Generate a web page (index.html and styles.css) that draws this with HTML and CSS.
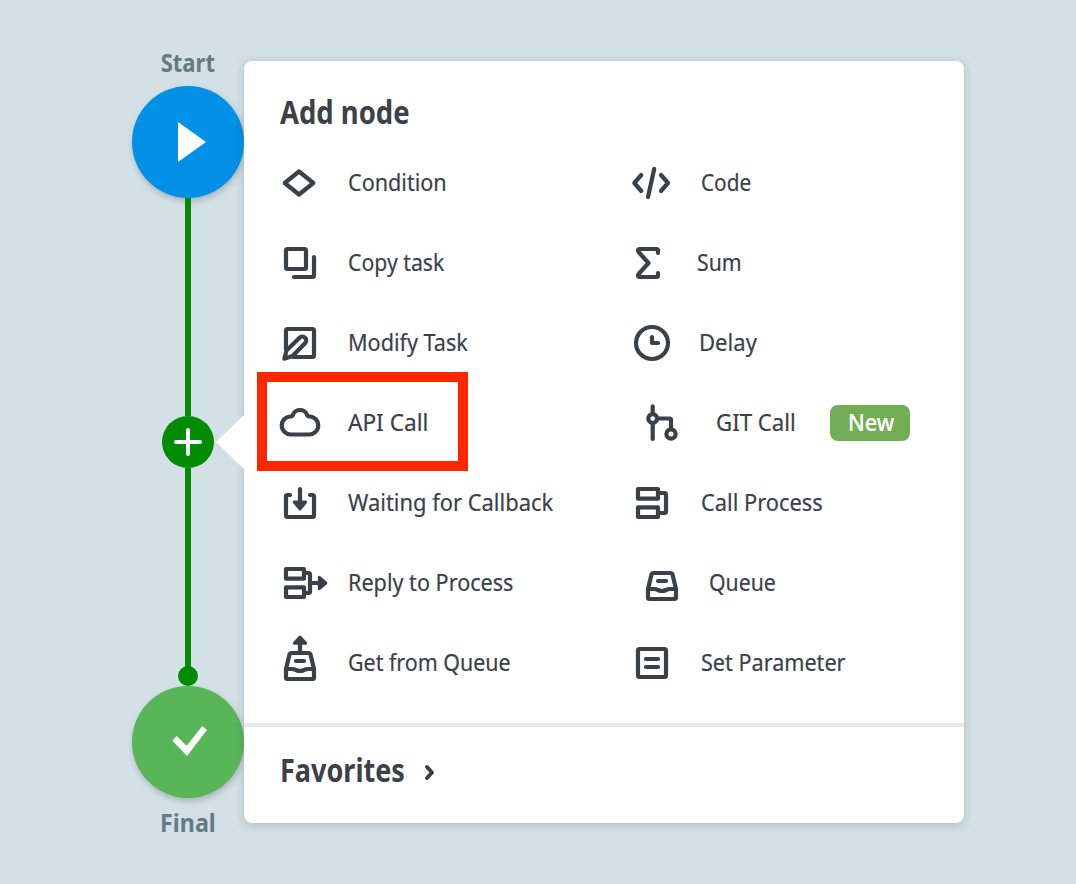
FILE: index.html
```html
<!DOCTYPE html>
<html lang="en">
<head>
<meta charset="utf-8">
<title>Add node</title>
<link rel="stylesheet" href="styles.css">
</head>
<body>
<main class="canvas">
  <section class="flow">
    <div class="node-label">Start</div>
    <div class="node node-start"><svg viewBox="0 0 112 112"><path d="M46 36 74 56 46 76Z"/></svg></div>
    <div class="edge edge-top"></div>
    <div class="plus"><svg viewBox="0 0 52 52"><path d="M26 14V38M14 26H38"/></svg></div>
    <div class="edge edge-bottom"></div>
    <div class="dot"></div>
    <div class="node node-final"><svg viewBox="0 0 112 112"><path d="M40.3 54.7 44.7 50 54.7 59.7 70.3 40 75 44 55 70Z"/></svg></div>
    <div class="node-label final-label">Final</div>
  </section>
  <section class="panel">
    <div class="callout"></div>
    <h1 class="title"><span class="t">Add node</span></h1>
    <div class="grid">
      <div class="item"><svg class="icon" viewBox="-24 -28 60 56"><path d="M-15.3 0-1-11.5 13.3 0-1 11.5Z"/></svg><span class="t">Condition</span></div>
      <div class="item code"><svg class="icon" viewBox="-24 -28 60 56"><path d="M-10.7-8-17.7 0-10.7 8M9-8 16 0 9 8M2.2-14-4 14"/></svg><span class="t">Code</span></div>

      <div class="item copy"><svg class="icon" viewBox="-24 -28 60 56"><rect x="-14" y="-14" width="20" height="20" rx="1.5"/><path d="M14-6V12.5Q14 14 12.5 14H-6"/></svg><span class="t">Copy task</span></div>
      <div class="item sum"><svg class="icon" viewBox="-24 -28 60 56"><path d="M6-10V-12.5Q6-14 4.5-14H-12Q-14-14-14-12.5-14-11.5-13-10.5L-3.5 0-13 10.5Q-14 11.5-14 12.5-14 14-12 14H4.5Q6 14 6 12.5V10"/></svg><span class="t">Sum</span></div>

      <div class="item"><svg class="icon" viewBox="-24 -28 60 56"><path d="M-14 6V-12.5Q-14-14-12.5-14H12.5Q14-14 14-12.5V12.5Q14 14 12.5 14H-7M-15.7 15.7-13.5 7.5-.2-5.5A3.9 3.9 0 0 1 5.3 0L-7.5 13Z"/></svg><span class="t">Modify Task</span></div>
      <div class="item delay"><svg class="icon" viewBox="-24 -28 60 56"><circle r="16"/><path d="M0-6V0H6"/></svg><span class="t">Delay</span></div>

      <div class="item api"><svg class="icon" viewBox="-24 -28 60 56"><path d="M-9 11.5A9 9 0 0 1-9.5-6.5C-8-6.5-7.5-7-7-8.5A7.7 7.7 0 0 1 7-8.5C7.5-7 8-6.5 9.5-6.5A9 9 0 0 1 9 11.5Z"/></svg><span class="t">API Call</span></div>
      <div class="item git"><svg class="icon" viewBox="-24 -28 60 56"><path d="M.7-16.7V-9M.7 0V16M6-4.5H17.5Q19-4.5 19-3V6"/><circle cx=".7" cy="-4.5" r="4.4"/><circle cx="19" cy="11" r="4.6"/></svg><span class="t">GIT Call</span><span class="badge"><span class="t">New</span></span></div>

      <div class="item waiting"><svg class="icon" viewBox="-24 -28 60 56"><path d="M-10-8H-12.5Q-14-8-14-6.5V12.5Q-14 14-12.5 14H12.5Q14 14 14 12.5V-6.5Q14-8 12.5-8H10M0-14V0"/><path class="head" d="M-5.7-1H5.7L0 6Z"/></svg><span class="t">Waiting for Callback</span></div>
      <div class="item call"><svg class="icon" viewBox="-24 -28 60 56"><path d="M-14-14H6V-4.3H-14ZM-14 4.3H6V14H-14ZM7-10H12.5Q14-10 14-8.5V8.5Q14 10 12.5 10H7"/></svg><span class="t">Call Process</span></div>

      <div class="item"><svg class="icon" viewBox="-24 -28 60 56"><path d="M-14-14H4V-4.3H-14ZM-14 4.3H4V14H-14ZM4-10H8.5Q10-10 10-8.5V8.5Q10 10 8.5 10H4M10 0H20"/><path class="head" d="M19.3-5.7V5.7L25.8 0Z"/></svg><span class="t">Reply to Process</span></div>
      <div class="item queue"><svg class="icon" viewBox="-34 -28 60 56"><path d="M-14 6-10.5-8.5Q-10-10-8.5-10H8.5Q10-10 10.5-8.5L14 6V14.5Q14 16 12.5 16H-12.5Q-14 16-14 14.5ZM-14 6H-8C-4 6-4 8 0 8S4 6 8 6H14M-4-2H4"/></svg><span class="t">Queue</span></div>

      <div class="item get"><svg class="icon" viewBox="-24 -28 60 56"><path d="M-14 6-10.5-8.5Q-10-10-8.5-10H8.5Q10-10 10.5-8.5L14 6V14.5Q14 16 12.5 16H-12.5Q-14 16-14 14.5ZM-14 6H-8C-4 6-4 8 0 8S4 6 8 6H14M-4-2H4M0-20V-10"/><path class="head" d="M-5.7-19.8H5.7L0-26Z"/></svg><span class="t">Get from Queue</span></div>
      <div class="item setp"><svg class="icon" viewBox="-24 -28 60 56"><rect x="-14" y="-14" width="28" height="28" rx="1.5"/><path d="M-6-4H6M-6 4H6"/></svg><span class="t">Set Parameter</span></div>
    </div>
    <div class="favorites"><span class="t">Favorites</span><svg class="chevron" viewBox="0 0 14 20"><path d="M4 5 9 10.5 4 16"/></svg></div>
    <div class="highlight"></div>
  </section>
</main>
</body>
</html>
```
FILE: styles.css
```css
* { box-sizing: border-box; }
body {
  margin: 0;
  background: #d3e0e6;
  color: #3a4149;
  font-family: "Noto Sans", sans-serif;
}
.canvas {
  display: flex;
  width: 1076px;
  height: 884px;
  padding-left: 132px;
  overflow: hidden;
}
svg { display: block; }
.t {
  display: inline-block;
  white-space: nowrap;
  transform-origin: left center;
  transform: scaleX(var(--sx, .9));
}
.flow {
  display: flex;
  flex-direction: column;
  align-items: center;
  width: 112px;
  padding-top: 45px;
}
.node-label {
  height: 41px;
  font-size: 25px;
  font-weight: 700;
  line-height: 34px;
  color: #647b85;
  transform: scaleX(.88);
}
.final-label {
  margin-top: 7px;
  transform: scaleX(.93);
}
.node {
  width: 112px;
  height: 112px;
  flex: none;
  border-radius: 50%;
  box-shadow: 1px 3px 6px rgba(0, 0, 0, .2);
}
.node path { fill: #fff; }
.node-start { background: #0291e6; }
.node-final { background: #58b558; }
.edge { width: 6px; background: #048b04; }
.edge-top { height: 218px; }
.edge-bottom { height: 200px; }
.plus {
  width: 52px;
  height: 52px;
  border-radius: 50%;
  background: #048b04;
}
.plus path { stroke: #fff; stroke-width: 4; stroke-linecap: round; }
.dot {
  width: 20px;
  height: 20px;
  margin-top: -2px;
  border-radius: 50%;
  background: #048b04;
}
.panel {
  position: relative;
  width: 720px;
  height: 762px;
  margin-top: 61px;
  border-radius: 8px;
  background: #fff;
  box-shadow: 0 2px 10px rgba(40, 70, 70, .22);
}
.callout {
  position: absolute;
  left: -28px;
  top: 353px;
  width: 29px;
  height: 56px;
  background: #fff;
  clip-path: polygon(0 50%, 100% 0, 100% 100%);
}
.title {
  --sx: .858;
  height: 82px;
  margin: 0;
  padding: 29px 0 0 36px;
  font-size: 32px;
  line-height: 44px;
}
.grid {
  display: grid;
  grid-template-columns: 352px 1fr;
  grid-auto-rows: 80px;
  height: 580px;
  padding-left: 32px;
}
.item {
  display: flex;
  align-items: center;
  gap: 12px;
  font-size: 24px;
}
.item .t { margin-top: -3px; -webkit-text-stroke: .2px currentColor; }
.icon {
  width: 60px;
  height: 56px;
  flex: none;
  fill: none;
  stroke: #3a4149;
  stroke-width: 4.2;
  stroke-linecap: round;
  stroke-linejoin: round;
}
.icon .head { fill: #3a4149; stroke-width: 3; }
.code, .call, .setp { gap: 13px; }
.code { --sx: .865; }
.copy { --sx: .885; }
.sum { --sx: .885; gap: 9px; }
.delay { --sx: .92; gap: 11px; }
.api { --sx: .942; }
.git { --sx: .925; gap: 28px; }
.waiting { --sx: .913; }
.call { --sx: .91; }
.queue { --sx: .885; gap: 21px; }
.get { --sx: .892; }
.badge {
  --sx: .9;
  display: flex;
  align-items: center;
  width: 80px;
  height: 36px;
  padding-left: 18px;
  border-radius: 8px;
  background: #73ad54;
  color: #fff;
  font-weight: 500;
}
.favorites {
  --sx: .844;
  display: flex;
  align-items: center;
  height: 100px;
  padding: 0 0 6px 36px;
  border-top: 4px solid #e3eaee;
  font-size: 32px;
  font-weight: 700;
}
.favorites .t { margin-top: -6px; }
.chevron {
  width: 14px;
  height: 20px;
  margin-left: -5px;
  fill: none;
  stroke: #3a4149;
  stroke-width: 4;
  stroke-linecap: round;
  stroke-linejoin: round;
}
.highlight {
  position: absolute;
  left: 13px;
  top: 311px;
  width: 211px;
  height: 99px;
  border: 10px solid #ff2600;
}
```
